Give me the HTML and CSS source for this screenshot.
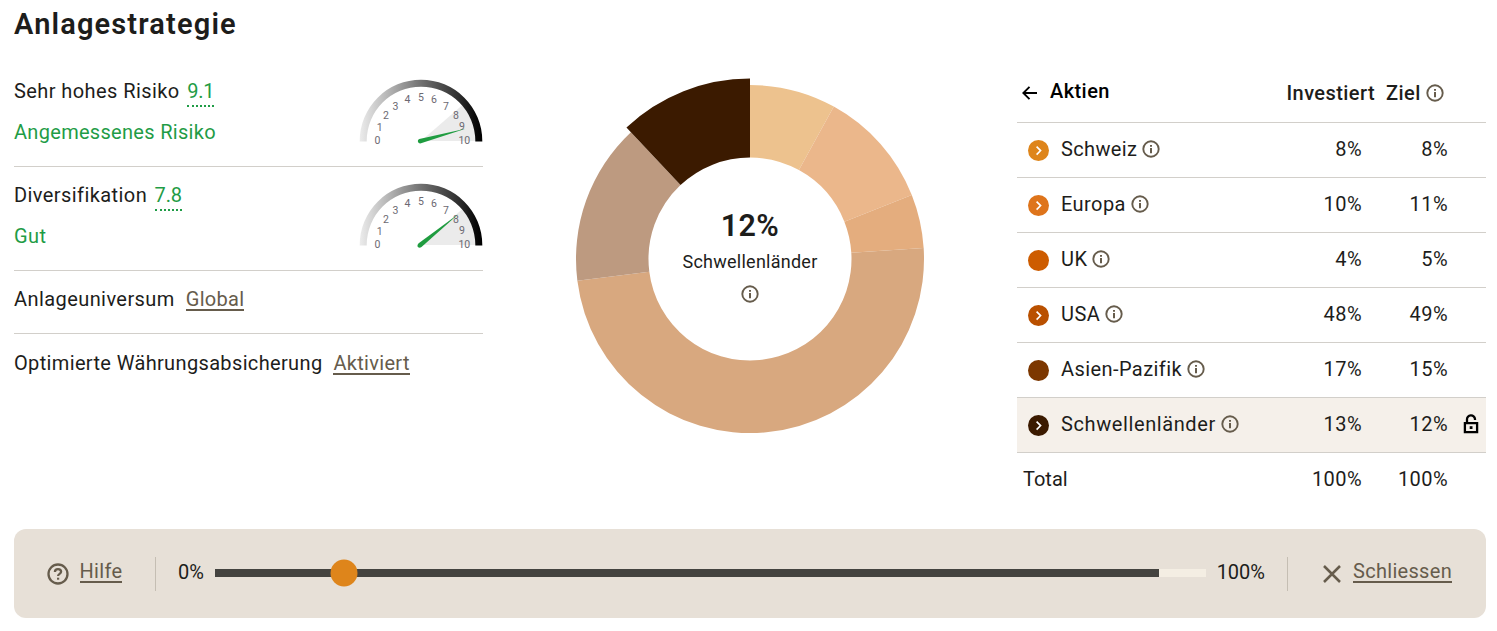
FILE: index.html
```html
<!DOCTYPE html>
<html lang="de">
<head>
<meta charset="utf-8">
<title>Anlagestrategie</title>
<link rel="stylesheet" href="styles.css">
</head>
<body>
<svg class="defs" width="0" height="0" aria-hidden="true">
  <defs>
    <symbol id="info" viewBox="0 0 18 18">
      <circle cx="9" cy="9" r="7.7" fill="none" stroke="currentColor" stroke-width="1.9"/>
      <path d="M8 4.900h2v1.800H8zM8 7.900h2v5.300H8z" fill="currentColor"/>
    </symbol>
    <symbol id="chevron" viewBox="0 0 21 21">
      <path d="M8.600 6.600l4 4-4 4" fill="none" stroke="#fff" stroke-width="1.600"/>
    </symbol>
    <linearGradient id="scale" x1="0" y1="0" x2="1" y2="0">
      <stop offset="0" stop-color="#ececec"/>
      <stop offset=".22" stop-color="#b8b8b8"/>
      <stop offset=".5" stop-color="#717171"/>
      <stop offset=".8" stop-color="#303030"/>
      <stop offset=".95" stop-color="#080808"/>
      <stop offset="1" stop-color="#000"/>
    </linearGradient>
    <g id="dial">
      <path d="M62 62L103.200 26.200A54.500 54.500 0 0 1 116.500 62z" fill="#ebebeb"/>
      <path d="M.7 62.600V62A61.300 61.300 0 0 1 123.300 62V62.600H116.300V62A54.300 54.300 0 0 0 7.700 62V62.600z" fill="url(#scale)"/>
      <g class="dial-numbers">
        <text x="18.5" y="64.8">0</text><text x="20.8" y="51.9">1</text><text x="27" y="40">2</text>
        <text x="36.5" y="30.7">3</text><text x="48.5" y="24.3">4</text><text x="62" y="21.9">5</text>
        <text x="75" y="24.3">6</text><text x="87" y="30.7">7</text><text x="97" y="40">8</text>
        <text x="103" y="51.2">9</text><text x="105.3" y="64.8">10</text>
      </g>
    </g>
  </defs>
</svg>
<main class="page">
  <h1 class="title">Anlagestrategie</h1>
  <div class="columns">
    <section class="facts">
      <div class="fact fact-gauge">
        <div class="fact-text">
          <div class="line"><span>Sehr hohes Risiko</span><span class="score">9.1</span></div>
          <div class="line good snug">Angemessenes Risiko</div>
        </div>
        <svg class="gauge" width="124" height="66" viewBox="0 0 124 66">
          <use href="#dial"/>
          <path d="M60.300 60L106.500 49.800 62 64.300q-2.400.5-3.100-1.500-.5-2.200 1.400-2.800z" fill="#1f9c40"/>
        </svg>
      </div>
      <div class="fact fact-gauge">
        <div class="fact-text">
          <div class="line"><span>Diversifikation</span><span class="score">7.8</span></div>
          <div class="line good">Gut</div>
        </div>
        <svg class="gauge" width="124" height="66" viewBox="0 0 124 66">
          <use href="#dial"/>
          <path d="M60 60L99.500 31 62.500 64q-2 1.500-3.600.1-1.300-1.800 1.100-4.100z" fill="#1f9c40"/>
        </svg>
      </div>
      <div class="fact">
        <div class="line wide"><span>Anlageuniversum</span><a class="link">Global</a></div>
      </div>
      <div class="fact">
        <div class="line wide"><span class="snug">Optimierte Währungsabsicherung</span><a class="link">Aktiviert</a></div>
      </div>
    </section>

    <section class="chart">
      <svg class="donut" width="364" height="364" viewBox="-182 -182 364 364">
        <path d="M0-174A174 174 0 0 1 83.830-152.480L48.900-88.940A101.500 101.500 0 0 0 0-101.500z" fill="#edc28e"/>
        <path d="M83.830-152.480A174 174 0 0 1 161.780-64.050L94.370-37.360A101.500 101.500 0 0 0 48.900-88.940z" fill="#ebb78b"/>
        <path d="M161.780-64.050A174 174 0 0 1 173.660-10.930L101.300-6.370A101.500 101.500 0 0 0 94.370-37.360z" fill="#e4ad7e"/>
        <path d="M173.660-10.930A174 174 0 0 1-172.630 21.810L-100.700 12.720A101.500 101.500 0 0 0 101.300-6.370z" fill="#d8a87f"/>
        <path d="M-172.630 21.810A174 174 0 0 1-119.110-126.840L-69.480-73.990A101.500 101.500 0 0 0-100.700 12.720z" fill="#bd9a80"/>
        <path d="M-123.560-131.580A180.500 180.500 0 0 1 0-180.500V-101.500A101.500 101.500 0 0 0-69.480-73.990z" fill="#3b1a00"/>
      </svg>
      <div class="donut-label">
        <strong>12%</strong>
        <span>Schwellenländer</span>
        <svg class="info"><use href="#info"/></svg>
      </div>
    </section>

    <section class="table">
      <div class="row head">
        <div class="name">
          <svg width="16" height="16" viewBox="0 0 16 16" class="back"><path d="M15 8H1.500M7.500 1.800L1.300 8l6.200 6.200" fill="none" stroke="#000" stroke-width="1.900"/></svg>
          <span>Aktien</span>
        </div>
        <div class="col-title">Investiert</div>
        <div class="col-title target">Ziel <svg class="info"><use href="#info"/></svg></div>
      </div>
      <div class="row"><div class="name"><svg class="dot schweiz"><use href="#chevron"/></svg><span class="snug">Schweiz</span><svg class="info"><use href="#info"/></svg></div><div class="num">8%</div><div class="num">8%</div></div>
      <div class="row"><div class="name"><svg class="dot europa"><use href="#chevron"/></svg><span>Europa</span><svg class="info"><use href="#info"/></svg></div><div class="num">10%</div><div class="num">11%</div></div>
      <div class="row"><div class="name"><svg class="dot uk"></svg><span>UK</span><svg class="info"><use href="#info"/></svg></div><div class="num">4%</div><div class="num">5%</div></div>
      <div class="row"><div class="name"><svg class="dot usa"><use href="#chevron"/></svg><span>USA</span><svg class="info"><use href="#info"/></svg></div><div class="num">48%</div><div class="num">49%</div></div>
      <div class="row"><div class="name"><svg class="dot asien"></svg><span>Asien-Pazifik</span><svg class="info"><use href="#info"/></svg></div><div class="num">17%</div><div class="num">15%</div></div>
      <div class="row selected"><div class="name"><svg class="dot schwellen"><use href="#chevron"/></svg><span class="loose">Schwellenländer</span><svg class="info"><use href="#info"/></svg></div><div class="num">13%</div><div class="num">12%</div>
        <svg class="lock" width="16" height="20" viewBox="0 0 16 20"><path d="M1.900 9.200h12.200v8.900H1.900zM4 9V5.600a4 4 0 0 1 8-.600V6" fill="none" stroke="#000" stroke-width="2.300"/><rect x="6.700" y="12.200" width="2.800" height="2.800"/></svg>
      </div>
      <div class="row total"><div class="name">Total</div><div class="num">100%</div><div class="num">100%</div></div>
    </section>
  </div>

  <section class="panel">
    <div class="action help">
      <svg width="22" height="22" viewBox="0 0 22 22" fill="none" stroke="currentColor" stroke-width="2.300"><circle cx="11" cy="11" r="9.500"/><path d="M7.900 9c0-1.900 1.300-2.900 3.100-2.900s3.100 1.100 3.100 2.700c0 2.100-3 2-3 4.100"/><path d="M10 14.700h2.200v2H10z" fill="currentColor" stroke="none"/></svg>
      <a class="link">Hilfe</a>
    </div>
    <div class="slider">
      <span>0%</span>
      <div class="track"><div class="range"></div><div class="thumb"></div></div>
      <span>100%</span>
    </div>
    <div class="action close">
      <svg width="18" height="18" viewBox="0 0 18 18"><path d="M1 1l16 16M17 1L1 17" stroke="currentColor" stroke-width="2.500"/></svg>
      <a class="link">Schliessen</a>
    </div>
  </section>
</main>
</body>
</html>
```
FILE: styles.css
```css
* { box-sizing: border-box; }
body {
  margin: 0;
  background: #fff;
  color: #1d1d1b;
  font-family: Roboto, "Liberation Sans", sans-serif;
  font-size: 20px;
  line-height: 28px;
  letter-spacing: .42px;
}
svg { display: block; flex: none; }
.defs { position: absolute; }
.page { width: 1497px; height: 631px; padding: 0 11px 0 14px; overflow: hidden; }
.title { margin: 0; height: 63px; padding-top: 4px; font-size: 29px; line-height: 40px; font-weight: 600; letter-spacing: 1.150px; }
.columns { display: grid; grid-template-columns: 469px 534px 469px; height: 466px; }

.fact { height: 63px; padding-top: 14px; border-bottom: 1px solid #d2cfca; }
.fact:last-child { border-bottom: 0; padding-top: 15px; }
.fact-gauge { height: 104px; display: flex; justify-content: space-between; }
.line { display: flex; align-items: baseline; height: 41px; gap: 7.5px; }
.line.wide { gap: 11px; }
.good, .score { color: #1f9c46; }
.snug { letter-spacing: .35px; }
.line.good.snug { letter-spacing: .3px; }
.score { border-bottom: 2px dotted #1f9c46; letter-spacing: -.2px; }
.link { color: #665c4c; line-height: 20px; border-bottom: 2px solid #665c4c; letter-spacing: .3px; }
.gauge { margin-top: 2px; }
.dial-numbers { font-size: 10.5px; letter-spacing: 0; text-anchor: middle; fill: #6c6972; }

.chart { display: grid; justify-items: center; padding-top: 14px; align-items: start; }
.donut, .donut-label { grid-area: 1 / 1; }
.donut-label { display: flex; flex-direction: column; align-items: center; padding-top: 129px; }
.donut-label strong { font-size: 30.5px; font-weight: 600; line-height: 40px; letter-spacing: .4px; }
.donut-label span { font-size: 18px; line-height: 26px; margin-top: 3px; letter-spacing: .25px; }
.donut-label .info { margin-top: 10px; }
.info { width: 18px; height: 18px; color: #665c4c; }

.row { display: grid; grid-template-columns: 259px 86px 86px 38px; align-items: center; height: 55px; padding-bottom: 2px; border-bottom: 1px solid #d2cfca; }
.head { height: 60px; grid-template-columns: 259px 99px 111px; font-weight: 500; padding-bottom: 0; }
.name { display: flex; align-items: center; padding-left: 11px; }
.name .info { margin-left: 5px; }
.head .name, .total .name { padding-left: 6px; }
.head .name { color: #000; margin-top: -3px; }
.back { margin: 4px 12px 0 -1px; }
.col-title { text-align: right; }
.target { display: flex; align-items: center; padding-left: 11px; gap: 5px; }
.num { text-align: right; }
.loose { letter-spacing: .6px; }
.dot { width: 21px; height: 21px; margin: 2px 12px 0 0; border-radius: 50%; }
.schweiz { background: #de851b; }
.europa { background: #de741b; }
.uk { background: #cd5c00; }
.usa { background: #b95000; }
.asien { background: #7c3700; }
.schwellen { background: #3b1a00; }
.selected { background: #f5f0ea; }
.lock { justify-self: end; margin-right: 7px; }
.total { border-bottom: 0; padding-bottom: 3px; }
.total .name { letter-spacing: 0; }

.panel { display: grid; grid-template-columns: 141px 1133px 198px; align-items: center; height: 89px; border-radius: 12px; background: #e7e0d7; }
.action { display: flex; align-items: center; color: #665c4c; }
.action .link { margin-top: -3px; }
.help { padding-left: 33px; gap: 10.5px; }
.close { padding-left: 34.5px; gap: 12.5px; }
.slider { display: flex; align-items: center; height: 34px; padding: 0 22px; border: solid #c5beb3; border-width: 0 1px; }
.slider span { margin-top: -4px; letter-spacing: 0; }
.track { position: relative; flex: 1; margin: -1px 11px 0; height: 8px; background: #f4eee3; }
.range { width: 95.3%; height: 100%; background: #44433f; }
.thumb { position: absolute; left: 13%; top: 50%; width: 27px; height: 27px; border-radius: 50%; background: #de851b; transform: translate(-50%, -50%); }
```
